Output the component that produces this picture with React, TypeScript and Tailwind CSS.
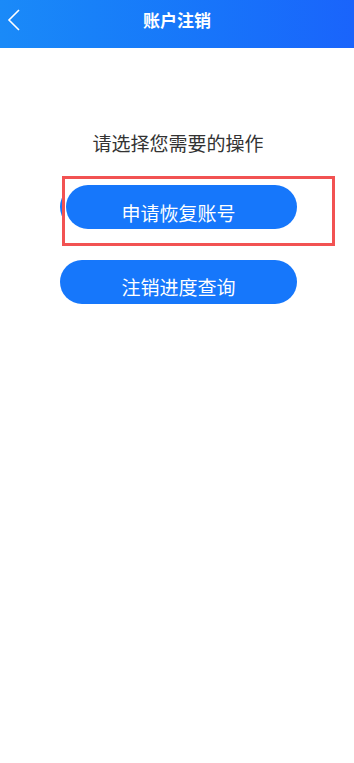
import React from 'react';

const font = { fontFamily: '"Noto Sans CJK SC", "Noto Sans", sans-serif' };

const App: React.FC = () => {
  return (
    <div className="min-h-[763px] w-[354px] bg-white" style={font}>
      {/* Header */}
      <header className="relative flex h-[48px] items-center justify-center bg-gradient-to-r from-[#1a8af8] to-[#1a64fb]">
        <button className="absolute left-[6px] top-[8px] h-[24px] w-[16px]">
          <svg viewBox="0 0 16 24" className="h-[24px] w-[16px]" fill="none">
            <polyline points="13,2 3,12 13,22" stroke="white" strokeWidth="1.6" strokeLinejoin="miter" />
          </svg>
        </button>
        <h1 className="-mt-[9px] text-[17px] font-bold text-white">账户注销</h1>
      </header>

      {/* Main Content */}
      <main className="flex flex-col pt-[83px]">
        <p className="pl-[2px] text-center text-[19px] leading-[24px] text-[#333333]">请选择您需要的操作</p>

        <div className="relative ml-[60px] mt-[30px] w-[237px]">
          <button className="flex h-[44px] w-full items-center justify-center rounded-full bg-[#1677fb] pt-[12px] text-[19px] leading-[24px] text-white">
            申请恢复账号
          </button>
          {/* highlight */}
          <div className="absolute left-[2px] top-[-9px] h-[70px] w-[273px] border-[3px] border-[#f25252] bg-white">
            <div className="ml-[1px] mt-[6px] flex h-[44px] w-[231px] items-center justify-center rounded-full bg-[#1677fb] pr-[6px] pt-[12px] text-[19px] leading-[24px] text-white">
              申请恢复账号
            </div>
          </div>
        </div>

        <button className="ml-[60px] mt-[31px] flex h-[44px] w-[237px] items-center justify-center rounded-full bg-[#1677fb] pt-[10px] text-[19px] leading-[24px] text-white">
          注销进度查询
        </button>
      </main>
    </div>
  );
};

export default App;
